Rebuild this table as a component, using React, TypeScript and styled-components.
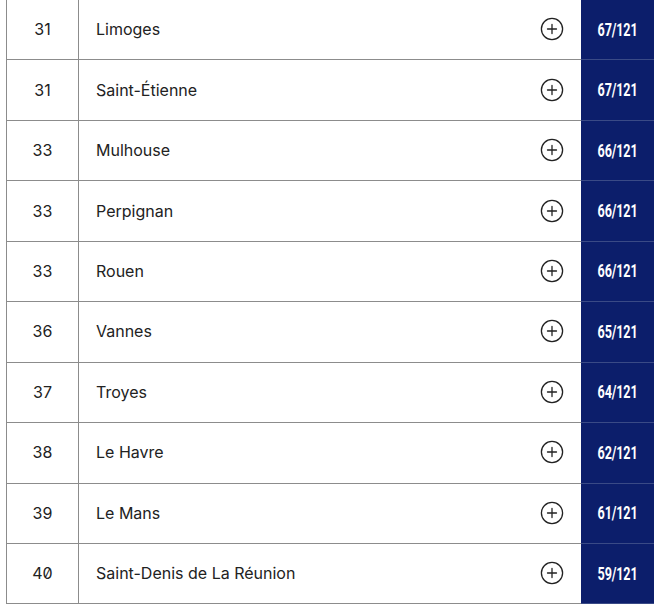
import React from "react";
import styled, { createGlobalStyle } from "styled-components";

const Global = createGlobalStyle`
  html, body { margin: 0; padding: 0; background: #ffffff; }
  body { font-family: Inter, "Noto Sans", Roboto, sans-serif; color: #222222; }
`;

const Table = styled.div`
  margin-left: 6px;
  width: 647px;
  display: flex;
  flex-direction: column;
  border-left: 1px solid #8c8c8c;
`;

const Row = styled.div`
  display: grid;
  grid-template-columns: 72px 1fr 73px;
  height: 60.44px;
  box-sizing: border-box;
  border-bottom: 1px solid #8c8c8c;
`;

const Rank = styled.div`
  display: flex;
  align-items: center;
  justify-content: center;
  border-right: 1px solid #8c8c8c;
  font-size: 16px;
  font-feature-settings: "zero" 1;
  padding-bottom: 1px;
`;

const City = styled.div`
  display: flex;
  align-items: center;
  justify-content: space-between;
  padding: 0 17px 1px 17px;
  font-size: 16px;
`;

const Score = styled.div`
  background: #0c1e6b;
  display: flex;
  align-items: center;
  justify-content: center;
  margin-bottom: -1px;
  border-bottom: 1px solid #3a4a86;
`;

const ScoreText = styled.span`
  display: inline-block;
  color: #ffffff;
  font-family: Roboto, "Liberation Sans", sans-serif;
  font-weight: 700;
  font-size: 18px;
  transform: scaleX(0.7);
  letter-spacing: -0.2px;
  padding-bottom: 1px;
`;

const PlusIcon = () => (
  <svg width="24" height="24" viewBox="0 0 24 24" fill="none" stroke="#222222" strokeWidth="1.3">
    <circle cx="12" cy="12" r="10.6" />
    <path d="M12 7.5v9M7.5 12h9" strokeLinecap="round" />
  </svg>
);

const rows = [
  ["31", "Limoges", "67/121"],
  ["31", "Saint-Étienne", "67/121"],
  ["33", "Mulhouse", "66/121"],
  ["33", "Perpignan", "66/121"],
  ["33", "Rouen", "66/121"],
  ["36", "Vannes", "65/121"],
  ["37", "Troyes", "64/121"],
  ["38", "Le Havre", "62/121"],
  ["39", "Le Mans", "61/121"],
  ["40", "Saint-Denis de La Réunion", "59/121"],
];

export default function App() {
  return (
    <>
      <Global />
      <Table>
        {rows.map(([r, c, s], i) => (
          <Row key={i}>
            <Rank>{r}</Rank>
            <City>
              <span>{c}</span>
              <PlusIcon />
            </City>
            <Score>
              <ScoreText>{s}</ScoreText>
            </Score>
          </Row>
        ))}
      </Table>
    </>
  );
}
